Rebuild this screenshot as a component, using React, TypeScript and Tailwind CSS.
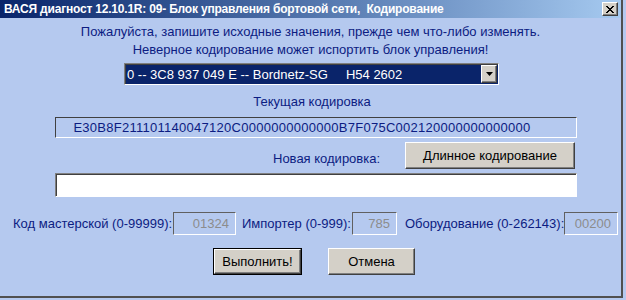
import React from "react";

const raised =
  "bg-[#d4d0c8] border border-t-white border-l-white border-b-[#404040] border-r-[#404040] shadow-[inset_-1px_-1px_0_#808080]";
const inset =
  "border border-t-[#808080] border-l-[#808080] border-b-white border-r-white shadow-[inset_1px_1px_0_#404040]";

export default function App() {
  return (
    <div
      className="w-[626px] h-[300px] bg-[#b5c9ef] overflow-hidden relative text-[#0c1c82] text-[13px]"
      style={{ fontFamily: '"Liberation Sans", Arial, sans-serif' }}
    >
      <div className="flex flex-col w-[623px] h-[298px] border-r-2 border-b-2 border-r-[#505050] border-b-[#505050]">
        {/* Title bar */}
        <div className="h-[18px] shrink-0 flex items-center justify-between bg-gradient-to-r from-[#0a246a] to-[#a6caf0] pl-[4px] pr-[3px]">
          <span className="text-white font-bold text-[12px] tracking-[-0.2px] whitespace-pre leading-none">
            ВАСЯ диагност 12.10.1R: 09- Блок управления бортовой сети,  Кодирование
          </span>
          <div className={`w-[16px] h-[14px] flex items-center justify-center ${raised}`}>
            <svg width="8" height="7" viewBox="0 0 8 7">
              <path d="M0 0 L7 7 M1 0 L8 7 M7 0 L0 7 M8 0 L1 7" stroke="black" strokeWidth="1" />
            </svg>
          </div>
        </div>

        {/* Info text */}
        <div className="flex flex-col items-center mt-[5px] leading-[18px]">
          <div>Пожалуйста, запишите исходные значения, прежде чем что-либо изменять.</div>
          <div>Неверное кодирование может испортить блок управления!</div>
        </div>

        {/* Dropdown */}
        <div className="flex justify-center mt-[4px]">
          <div className={`ml-[2px] w-[375px] h-[22px] flex items-center bg-[#0a246a] ${inset}`}>
            <span className="flex-1 pl-[2px] text-white whitespace-pre leading-none">
              0 -- 3C8 937 049 E -- Bordnetz-SG     H54 2602
            </span>
            <div className={`w-[16px] h-[18px] mr-[1px] flex items-center justify-center ${raised}`}>
              <svg width="7" height="4" viewBox="0 0 7 4">
                <path d="M0 0 H7 L3.5 4 Z" fill="black" />
              </svg>
            </div>
          </div>
        </div>

        {/* Current coding */}
        <div className="flex justify-center mt-[8px] leading-[18px] pl-[3px]">Текущая кодировка</div>
        <div className="mt-[6px] ml-[55px] w-[522px] h-[21px] flex items-center justify-center pr-[28px] border border-t-[#404040] border-l-[#404040] border-b-white border-r-white">
          <span className="leading-none tracking-[0.27px]">E30B8F211101140047120C0000000000000B7F075C002120000000000000</span>
        </div>

        {/* New coding */}
        <div className="flex items-end mt-[4px] h-[27px]">
          <span className="ml-[273px] leading-[18px] mb-[1px]">Новая кодировка:</span>
          <div className={`ml-auto mr-[46px] w-[170px] h-[27px] flex items-center justify-center text-black ${raised}`}>
            Длинное кодирование
          </div>
        </div>
        <div className={`mt-[4px] ml-[55px] w-[522px] h-[24px] shrink-0 bg-white ${inset}`}></div>

        {/* Numeric fields */}
        <div className="flex items-center mt-[15px] h-[23px] pl-[13px]">
          <span className="w-[159px] whitespace-nowrap">Код мастерской (0-99999):</span>
          <div className="ml-[1px] w-[63px] h-[23px] flex items-center justify-end pr-[6px] text-[#8c8c8c] border border-t-[#606060] border-l-[#606060] border-b-white border-r-white">
            01324
          </div>
          <span className="ml-[6px] w-[106px] whitespace-nowrap">Импортер (0-999):</span>
          <div className="ml-[4px] w-[45px] h-[23px] flex items-center justify-end pr-[6px] text-[#8c8c8c] border border-t-[#606060] border-l-[#606060] border-b-white border-r-white">
            785
          </div>
          <span className="ml-[8px] w-[158px] whitespace-nowrap">Оборудование (0-262143):</span>
          <div className="ml-[1px] w-[54px] h-[23px] flex items-center justify-end pr-[6px] text-[#8c8c8c] border border-t-[#606060] border-l-[#606060] border-b-white border-r-white">
            00200
          </div>
        </div>

        {/* Buttons */}
        <div className="flex mt-[13px] pl-[213px]">
          <div className="w-[89px] h-[27px] border border-black">
            <div className={`w-full h-full flex items-center justify-center text-black ${raised}`}>Выполнить!</div>
          </div>
          <div className={`ml-[26px] w-[87px] h-[27px] flex items-center justify-center text-black ${raised}`}>
            Отмена
          </div>
        </div>
      </div>
    </div>
  );
}
